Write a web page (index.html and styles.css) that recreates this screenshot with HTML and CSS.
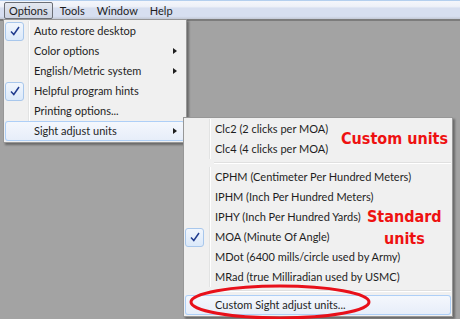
FILE: index.html
```html
<!DOCTYPE html>
<html lang="en">
<head>
    <meta charset="UTF-8">
    <title>Options menu</title>
    <link rel="stylesheet" href="styles.css">
</head>
<body>
    <div class="menubar">
        <span class="top-item open">Options</span>
        <span class="top-item">Tools</span>
        <span class="top-item">Window</span>
        <span class="top-item">Help</span>
    </div>

    <div class="menu main-menu">
        <div class="item checked">
            <span class="gutter"><span class="check"><svg width="12" height="12" viewBox="0 0 12 12"><path d="M2 6.5 L4.8 9.5 L10 2" fill="none" stroke="#213c8f" stroke-width="1.5"/></svg></span></span>
            <span class="label">Auto restore desktop</span>
        </div>
        <div class="item">
            <span class="gutter"></span>
            <span class="label">Color options</span>
            <span class="arrow"></span>
        </div>
        <div class="item">
            <span class="gutter"></span>
            <span class="label">English/Metric system</span>
            <span class="arrow"></span>
        </div>
        <div class="item checked">
            <span class="gutter"><span class="check"><svg width="12" height="12" viewBox="0 0 12 12"><path d="M2 6.5 L4.8 9.5 L10 2" fill="none" stroke="#213c8f" stroke-width="1.5"/></svg></span></span>
            <span class="label">Helpful program hints</span>
        </div>
        <div class="item">
            <span class="gutter"></span>
            <span class="label">Printing options...</span>
        </div>
        <div class="item hot">
            <span class="gutter"></span>
            <span class="label">Sight adjust units</span>
            <span class="arrow"></span>
        </div>
    </div>

    <div class="menu sub-menu">
        <div class="item">
            <span class="gutter"></span>
            <span class="label">Clc2 (2 clicks per MOA)</span>
        </div>
        <div class="item">
            <span class="gutter"></span>
            <span class="label">Clc4 (4 clicks per MOA)</span>
        </div>
        <div class="sep"></div>
        <div class="item">
            <span class="gutter"></span>
            <span class="label">CPHM (Centimeter Per Hundred Meters)</span>
        </div>
        <div class="item">
            <span class="gutter"></span>
            <span class="label">IPHM (Inch Per Hundred Meters)</span>
        </div>
        <div class="item">
            <span class="gutter"></span>
            <span class="label">IPHY (Inch Per Hundred Yards)</span>
        </div>
        <div class="item checked">
            <span class="gutter"><span class="check"><svg width="12" height="12" viewBox="0 0 12 12"><path d="M2 6.5 L4.8 9.5 L10 2" fill="none" stroke="#213c8f" stroke-width="1.5"/></svg></span></span>
            <span class="label">MOA (Minute Of Angle)</span>
        </div>
        <div class="item">
            <span class="gutter"></span>
            <span class="label">MDot (6400 mills/circle used by Army)</span>
        </div>
        <div class="item">
            <span class="gutter"></span>
            <span class="label">MRad (true Milliradian used by USMC)</span>
        </div>
        <div class="sep"></div>
        <div class="item hot">
            <span class="gutter"></span>
            <span class="label">Custom Sight adjust units...</span>
        </div>
    </div>

    <div class="note note-custom">Custom units</div>
    <div class="note note-standard">Standard<br>units</div>

    <svg class="circle" width="190" height="40" viewBox="0 0 190 40">
        <ellipse cx="92" cy="19" rx="89" ry="16" fill="none" stroke="#e8101a" stroke-width="3"/>
    </svg>
</body>
</html>
```

FILE: styles.css
```css
body {
    margin: 0;
    width: 460px;
    height: 319px;
    overflow: hidden;
    background-color: #a3a3a3;
    font-family: Lato, "Open Sans", sans-serif;
    font-size: 11px;
    color: #1e1e1e;
    position: relative;
}

.menubar {
    height: 18px;
    display: flex;
    align-items: center;
    padding-left: 4px;
    border-top: 1px solid #b4cfee;
    border-bottom: 2px solid #7c7c7c;
    background: linear-gradient(#f4f6fb 0%, #eef1f8 30%, #d7dff0 40%, #d7dff0 85%, #c3c9d6 100%);
}

.top-item {
    padding: 0 5px;
    height: 15px;
    line-height: 15px;
    border: 1px solid transparent;
}

.top-item.open {
    border-color: #6b6f76;
    border-radius: 2px;
    background: linear-gradient(#e4e8f0, #cdd4e2);
    padding: 0 4px;
    margin-right: 1px;
}

.menu {
    position: absolute;
    background-color: #f0f0f0;
    border: 1px solid #979797;
    box-shadow: 2px 2px 2px rgba(0, 0, 0, 0.35);
    padding: 1px;
}

.main-menu {
    left: 3px;
    top: 19px;
    width: 180px;
}

.sub-menu {
    left: 183px;
    top: 117px;
    width: 266px;
}

.item {
    display: flex;
    align-items: center;
    height: 20px;
    border-radius: 3px;
}

.gutter {
    width: 23px;
    height: 100%;
    display: flex;
    align-items: center;
    border-right: 1px solid #e2e3e3;
    box-shadow: 1px 0 0 #ffffff;
    margin-right: 5px;
}

.sub-menu .gutter {
    width: 24px;
}

.check {
    width: 19px;
    height: 19px;
    box-sizing: border-box;
    border: 1px solid #a8c7ec;
    border-radius: 3px;
    background: linear-gradient(#f1f6fd, #dbe9fa);
    display: flex;
    align-items: center;
    justify-content: center;
}

.label {
    flex: 1;
    white-space: nowrap;
    line-height: 20px;
}

.arrow {
    width: 0;
    height: 0;
    border-top: 3.5px solid transparent;
    border-bottom: 3.5px solid transparent;
    border-left: 4px solid #1e1e1e;
    margin-right: 8px;
}

.item.hot {
    box-shadow: inset 0 0 0 1px #aecff7;
    background: linear-gradient(#f5f8fd, #e6edf9);
}

.item.hot .gutter {
    border-right-color: transparent;
    box-shadow: none;
}

.sep {
    height: 1px;
    background-color: #e0e0e0;
    border-bottom: 1px solid #ffffff;
    margin: 3px 0 3px 29px;
}

.note {
    position: absolute;
    color: #ee1111;
    font-family: "Comic Sans MS", "DejaVu Sans Condensed", "DejaVu Sans", sans-serif;
    font-weight: bold;
    font-size: 16px;
    line-height: 22px;
    text-align: center;
    white-space: nowrap;
}

.note-custom {
    left: 341px;
    top: 128px;
}

.note-standard {
    left: 367px;
    top: 206px;
}

.circle {
    position: absolute;
    left: 188px;
    top: 283px;
}
```
